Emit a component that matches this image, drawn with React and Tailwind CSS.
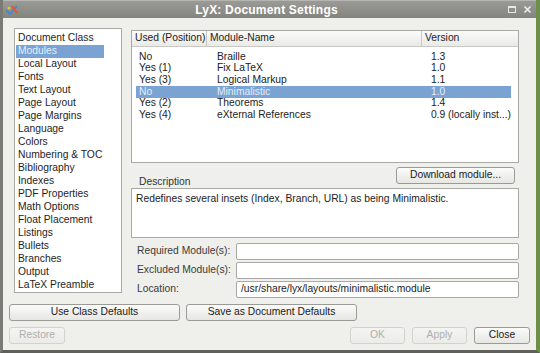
import React from "react";

const sections = [
  "Document Class",
  "Modules",
  "Local Layout",
  "Fonts",
  "Text Layout",
  "Page Layout",
  "Page Margins",
  "Language",
  "Colors",
  "Numbering & TOC",
  "Bibliography",
  "Indexes",
  "PDF Properties",
  "Math Options",
  "Float Placement",
  "Listings",
  "Bullets",
  "Branches",
  "Output",
  "LaTeX Preamble",
];

const modules = [
  { used: "No", name: "Braille", version: "1.3" },
  { used: "Yes (1)", name: "Fix LaTeX", version: "1.0" },
  { used: "Yes (3)", name: "Logical Markup", version: "1.1" },
  { used: "No", name: "Minimalistic", version: "1.0", selected: true },
  { used: "Yes (2)", name: "Theorems", version: "1.4" },
  { used: "Yes (4)", name: "eXternal References", version: "0.9 (locally inst...)" },
];

function Button({ children, className = "", disabled }) {
  return (
    <div
      className={`flex items-center justify-center rounded-[3px] border h-[17px] bg-gradient-to-b whitespace-nowrap ${
        disabled
          ? "border-[#d2d2ce] from-[#f4f4f2] to-[#ebebe8] text-[#b0b0ac]"
          : "border-[#9a9a96] from-[#fbfbfa] to-[#e6e6e2] text-[#1a1a1a]"
      } ${className}`}
    >
      {children}
    </div>
  );
}

function Field({ label, value }) {
  return (
    <div className="flex items-center h-[17px]">
      <div className="w-[105px] pl-[6px] text-[#3a3a3a] whitespace-nowrap">{label}</div>
      <div className="flex-1 h-[17px] bg-white border border-[#a8a8a4] rounded-[2px] pl-[4px] flex items-center text-[#222]">
        {value}
      </div>
    </div>
  );
}

export default function App() {
  return (
    <div
      className="w-[540px] h-[353px] flex flex-col bg-[#efefec] border-l-[3px] border-r-[4px] border-b-[3px] border-l-[#7a7a76] border-r-[#6d8f4c] border-b-[#5f5f5b] text-[10.3px] leading-none overflow-hidden"
      style={{ fontFamily: '"Liberation Sans", Arial, sans-serif' }}
    >
      {/* Title bar */}
      <div className="h-[18px] shrink-0 flex items-center bg-gradient-to-b from-[#9a9a96] to-[#84847f] border-t border-[#b5b5b1]">
        <svg width="14" height="10" viewBox="0 0 14 10" className="ml-[2px]">
          <path d="M1 5 L5 9 L12 1" stroke="#4f86c8" strokeWidth="2" fill="none" />
          <path d="M7 1 L12 8" stroke="#e0582b" strokeWidth="2" />
          <circle cx="4" cy="3" r="1.5" fill="#e6c23a" />
        </svg>
        <div className="flex-1 text-center text-white font-bold text-[12px] pl-[6px] tracking-[0.2px]">
          LyX: Document Settings
        </div>
        <div className="flex items-center gap-[7px] pr-[4px]">
          <div className="w-[8px] h-[7px] border border-[#e8e8e4] border-t-2" />
          <svg width="9" height="9" viewBox="0 0 9 9">
            <path d="M1.5 1.5 L7.5 7.5 M7.5 1.5 L1.5 7.5" stroke="#f0f0ec" strokeWidth="1.6" />
          </svg>
        </div>
      </div>

      {/* Body */}
      <div className="flex-1 flex flex-col pl-[6px] pr-[6px]">
        <div className="flex items-start mt-[10px] ml-[5px]">
          {/* Sections list */}
          <div className="w-[108px] h-[265px] bg-white border border-[#a9a9a5] pt-[3px] pl-[1px]">
            {sections.map((s) => (
              <div
                key={s}
                className={`h-[13px] flex items-center pl-[2px] w-[88px] whitespace-nowrap ${
                  s === "Modules" ? "bg-[#7aa3d4] text-[#e4eefa]" : "text-[#1e1e1e]"
                }`}
              >
                {s}
              </div>
            ))}
          </div>

          {/* Right panel */}
          <div className="ml-[9px] w-[388px] flex flex-col">
            {/* Modules table */}
            <div className="h-[133px] mt-[2px] bg-white border border-[#a9a9a5]">
              <div className="h-[16px] flex items-center bg-gradient-to-b from-[#fbfbfa] to-[#e9e9e6] border-b border-[#c8c8c4] text-[#222] whitespace-nowrap">
                <div className="w-[75px] pl-[3px] h-full flex items-center border-r border-[#c8c8c4]">
                  Used (Position)
                </div>
                <div className="w-[215px] pl-[3px] h-full flex items-center border-r border-[#c8c8c4]">
                  Module-Name
                </div>
                <div className="pl-[3px]">Version</div>
              </div>
              <div className="pt-[4px] pl-[4px] pr-[7px]">
                {modules.map((m) => (
                  <div
                    key={m.name}
                    className={`h-[11.7px] flex items-center whitespace-nowrap ${
                      m.selected ? "bg-[#7aa3d4] text-[#e4eefa]" : "text-[#222]"
                    }`}
                  >
                    <div className="w-[81px] pl-[3px]">{m.used}</div>
                    <div className="w-[212px]">{m.name}</div>
                    <div className="pl-[2px]">{m.version}</div>
                  </div>
                ))}
              </div>
            </div>

            {/* Download + description */}
            <div className="flex justify-end mt-[4px]">
              <Button className="w-[119px] mr-[4px]">Download module...</Button>
            </div>
            <div className="-mt-[7px] pl-[8px] h-[10px] text-[#333]">Description</div>
            <div className="mt-[1px] h-[50px] bg-white border border-[#a9a9a5] pl-[4px] pt-[5px] text-[#222]">
              Redefines several insets (Index, Branch, URL) as being Minimalistic.
            </div>

            {/* Fields */}
            <div className="mt-[5px] flex flex-col gap-[2px]">
              <Field label="Required Module(s):" />
              <Field label="Excluded Module(s):" />
              <Field label="Location:" value="/usr/share/lyx/layouts/minimalistic.module" />
            </div>
          </div>
        </div>

        {/* Defaults buttons */}
        <div className="flex gap-[6px] mt-[6px]">
          <Button className="w-[171px]">Use Class Defaults</Button>
          <Button className="w-[171px]">Save as Document Defaults</Button>
        </div>

        {/* Bottom buttons */}
        <div className="flex mt-[6px]">
          <Button className="w-[56px]" disabled>
            Restore
          </Button>
          <div className="flex-1" />
          <Button className="w-[55px]" disabled>
            OK
          </Button>
          <Button className="w-[55px] ml-[7px]" disabled>
            Apply
          </Button>
          <Button className="w-[56px] ml-[7px]">Close</Button>
        </div>
      </div>
    </div>
  );
}
